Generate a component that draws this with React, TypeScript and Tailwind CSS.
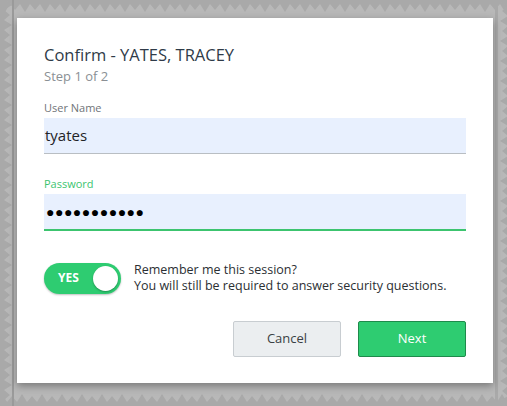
import React from "react";

function Backdrop() {
  return (
    <svg className="absolute inset-0 h-full w-full" width="507" height="406">
      <defs>
        <pattern id="zzTop" width="20" height="14" patternUnits="userSpaceOnUse">
          <path d="M0 0 H20 V4 L15 10 L10 4 L5 12 L0 4 Z" fill="#a9a9a9" />
        </pattern>
        <pattern id="zzSide" width="14" height="20" patternUnits="userSpaceOnUse">
          <path d="M0 0 V20 H4 L10 15 L4 10 L12 5 L4 0 Z" fill="#a9a9a9" />
        </pattern>
      </defs>
      <rect x="0" y="0" width="507" height="12" fill="url(#zzTop)" />
      <rect x="0" y="392" width="507" height="14" fill="url(#zzTop)" transform="rotate(180 253.5 399)" />
      <rect x="0" y="0" width="12" height="406" fill="url(#zzSide)" />
      <rect x="495" y="0" width="12" height="406" fill="url(#zzSide)" transform="rotate(180 501 203)" />
      <rect x="12" y="0" width="2" height="406" fill="#9a9a9a" />
    </svg>
  );
}

export default function App() {
  return (
    <div
      className="relative h-[406px] w-[507px] overflow-hidden bg-[#b8b8b8] pl-[17px] pt-[18px]"
      style={{ fontFamily: '"Open Sans", "Noto Sans", sans-serif' }}
    >
      <Backdrop />
      <div className="relative flex h-[365px] w-[476px] flex-col bg-white px-[27px] pt-[27px] shadow-[0_3px_8px_rgba(0,0,0,0.35)]">
        <h2 className="text-[16.5px] leading-[20px] text-[#2f3b48]">Confirm - YATES, TRACEY</h2>
        <p className="mt-[2px] text-[13px] leading-[18px] text-[#8a8f94]">Step 1 of 2</p>

        <label className="mt-[15px] text-[11px] leading-[16px] text-[#6f7478]">User Name</label>
        <div className="mt-[2px] flex h-[36px] items-center border-b border-[#b9bec3] bg-[#e8f0fe] pl-[1px] text-[15px] text-[#1f2326]">
          tyates
        </div>

        <label className="mt-[22px] text-[11px] leading-[16px] text-[#3cc46f]">Password</label>
        <div className="mt-[2px] flex h-[37px] items-center border-b-2 border-[#3cc46f] bg-[#e8f0fe] pl-[2px] text-[14px] tracking-[0.5px] text-black">
          ●●●●●●●●●●●
        </div>

        <div className="mt-[31px] flex items-center gap-[13px]">
          <div className="flex h-[31px] w-[77px] items-center justify-between rounded-full bg-[#2ecc71] pl-[14px] pr-[3px] shadow-[0_1px_2px_rgba(0,0,0,0.25)]">
            <span className="text-[12px] font-bold text-white">YES</span>
            <span className="h-[25px] w-[25px] rounded-full bg-white shadow-[0_1px_2px_rgba(0,0,0,0.3)]" />
          </div>
          <div className="text-[12.5px] leading-[16px] text-[#2b2f33]">
            <p>Remember me this session?</p>
            <p>You will still be required to answer security questions.</p>
          </div>
        </div>

        <div className="mt-[27px] flex justify-end gap-[17px]">
          <button className="h-[36px] w-[108px] rounded-[2px] border border-[#c8cdd1] bg-[#ebeef0] text-[13px] text-[#3a3f44]">
            Cancel
          </button>
          <button className="h-[36px] w-[108px] rounded-[2px] border border-[#1e8a4b] bg-[#2ecc71] text-[13px] text-white">
            Next
          </button>
        </div>
      </div>
    </div>
  );
}
